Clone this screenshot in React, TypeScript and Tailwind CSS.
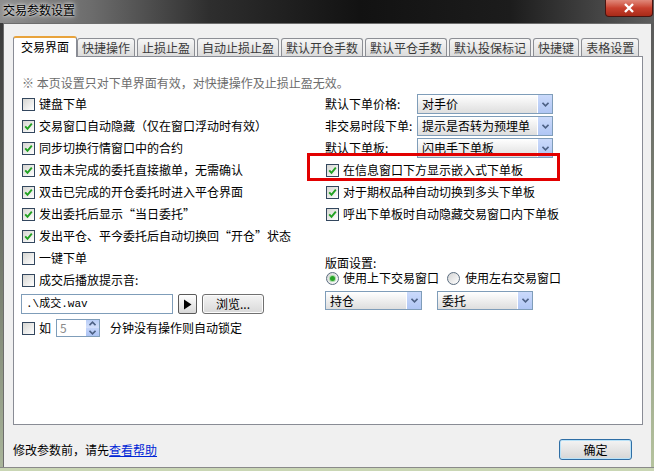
import React from "react";

const leftRows: { text: string; on: boolean }[] = [
  { text: "键盘下单", on: false },
  { text: "交易窗口自动隐藏（仅在窗口浮动时有效）", on: true },
  { text: "同步切换行情窗口中的合约", on: true },
  { text: "双击未完成的委托直接撤单，无需确认", on: true },
  { text: "双击已完成的开仓委托时进入平仓界面", on: true },
  { text: "发出委托后显示“当日委托”", on: true },
  { text: "发出平仓、平今委托后自动切换回“开仓”状态", on: true },
  { text: "一键下单", on: false },
  { text: "成交后播放提示音:", on: false },
];

const tabs = ["快捷操作", "止损止盈", "自动止损止盈", "默认开仓手数", "默认平仓手数", "默认投保标记", "快捷键", "表格设置"];

function Check({ on }: { on?: boolean }) {
  return (
    <span className="w-[13px] h-[13px] shrink-0 border border-[#33475e] bg-linear-to-br from-[#d6d6d2] to-white flex items-center justify-center">
      {on && (
        <svg width="9" height="9" viewBox="0 0 9 9">
          <path d="M1.2 4.3 L3.5 6.8 L7.8 1.6" stroke="#21a121" strokeWidth="1.9" fill="none" />
        </svg>
      )}
    </span>
  );
}

function Radio({ on }: { on?: boolean }) {
  return (
    <span className="w-[13px] h-[13px] shrink-0 rounded-full border border-[#5b6d80] bg-linear-to-br from-[#d4d4d4] to-white flex items-center justify-center">
      {on && <span className="w-[5px] h-[5px] rounded-full bg-[#27a327] shadow-[0_0_0_1px_#a8dca8]" />}
    </span>
  );
}

function Chevron() {
  return (
    <svg width="7" height="5" viewBox="0 0 7 5">
      <path d="M0.5 0.8 L3.5 3.8 L6.5 0.8" stroke="#4d6185" strokeWidth="1.6" fill="none" />
    </svg>
  );
}

function Combo({ className, text }: { className: string; text: string }) {
  return (
    <div className={`${className} border border-[#7f9db9] flex bg-linear-to-b from-white to-[#dedede]`}>
      <span className="flex-1 pl-[4px] flex items-center">{text}</span>
      <span className="w-[15px] border-l border-white bg-linear-to-b from-[#cbdafb] to-[#b0c6f4] flex items-center justify-center">
        <Chevron />
      </span>
    </div>
  );
}

export default function App() {
  return (
    <div className="relative w-[654px] h-[471px] overflow-hidden bg-[#2a2a2a] text-[12px] text-black font-['Noto_Sans_CJK_SC','Noto_Sans',sans-serif]">
      {/* title bar */}
      <div className="h-[23px] flex items-start justify-between bg-[linear-gradient(90deg,#8e8e8e_0%,#6c6c6c_14%,#2e2e2e_32%,#121212_55%,#1c1c1c_78%,#5e5e5e_100%)]">
        <span className="pl-[3px] leading-[20px] [text-shadow:0_0_6px_#e8e8e8,0_0_3px_#ffffff]">交易参数设置</span>
        <span className="w-[48px] h-[17px] mr-px rounded-b-[4px] border border-t-0 border-[#4a1410] bg-linear-to-b from-[#e0887a] via-[#c8402e] to-[#a82a18] flex items-center justify-center">
          <svg width="12" height="10" viewBox="0 0 12 10">
            <path d="M2 1 L10 9 M10 1 L2 9" stroke="#fff" strokeWidth="2.4" />
          </svg>
        </span>
      </div>

      <div className="flex h-[444px]">
        <div className="w-[3px] bg-linear-to-b from-[#3a3a3a] to-[#a9b59a]" />
        {/* client area */}
        <div className="w-[648px] bg-[#f0f0f0] border-t border-l border-[#6d6d6d] flex flex-col">
          {/* tabs */}
          <div className="flex items-end ml-[9px] mt-[11px] h-[21px] relative z-10">
            <div className="h-[21px] -mb-px px-[7px] pt-[1px] bg-white border border-b-0 border-[#898c95] border-t-[2px] border-t-[#e8a33c] rounded-t-[3px] leading-[16px]">
              交易界面
            </div>
            {tabs.map((t, i) => (
              <div
                key={t}
                className={`${i === 0 ? "" : "ml-[2px]"} h-[18px] px-[4px] border border-b-0 border-[#8c8e94] rounded-t-[3px] bg-linear-to-b from-[#f6f6f6] to-[#dcdcdc] text-[#3a3a3a] leading-[17px]`}
              >
                {t}
              </div>
            ))}
          </div>

          {/* panel */}
          <div className="relative h-[369px] ml-[9px] mr-[8px] border border-[#898c95] bg-white pl-[8px] pt-[15px]">
            <div className="h-[21px] leading-[21px] text-[#6d6d6d]">※ 本页设置只对下单界面有效，对快捷操作及止损止盈无效。</div>
            <div className="flex">
              {/* left column */}
              <div className="w-[303px] flex flex-col">
                {leftRows.map((r) => (
                  <div key={r.text} className="h-[22px] flex items-center gap-[4px]">
                    <Check on={r.on} />
                    <span>{r.text}</span>
                  </div>
                ))}
                <div className="mt-[3px] h-[20px] flex">
                  <div className="-ml-px w-[152px] border border-[#7f9db9] bg-white pl-[4px] flex items-center font-['Liberation_Mono','Noto_Sans_CJK_SC',monospace] text-[11px]">
                    .\成交.wav
                  </div>
                  <div className="ml-[5px] w-[19px] border border-[#5a5a5a] rounded-[2px] bg-linear-to-b from-white to-[#d8d8d8] flex items-center justify-center">
                    <svg width="9" height="11" viewBox="0 0 9 11">
                      <path d="M1 0.5 L8.5 5.5 L1 10.5 Z" fill="#000" />
                    </svg>
                  </div>
                  <div className="ml-[5px] w-[62px] border border-[#707070] rounded-[3px] bg-linear-to-b from-[#f4f4f4] to-[#d9d9d9] shadow-[inset_0_0_0_1px_#fcfcfc] flex items-center justify-center">
                    浏览...
                  </div>
                </div>
                <div className="mt-[3px] h-[22px] flex items-center">
                  <Check />
                  <span className="ml-[4px]">如</span>
                  <div className="ml-[5px] w-[44px] h-[18px] border border-[#7f9db9] bg-white flex">
                    <span className="flex-1 pl-[3px] text-[#8a8a8a] flex items-center">5</span>
                    <span className="w-[14px] flex flex-col border-l border-white">
                      <span className="flex-1 bg-linear-to-b from-[#d4e0fb] to-[#b8cdf6] flex items-center justify-center rotate-180">
                        <Chevron />
                      </span>
                      <span className="flex-1 bg-linear-to-b from-[#c3d4fa] to-[#acc3f3] flex items-center justify-center">
                        <Chevron />
                      </span>
                    </span>
                  </div>
                  <span className="ml-[10px]">分钟没有操作则自动锁定</span>
                </div>
              </div>

              {/* right column */}
              <div className="flex flex-col">
                {[
                  ["默认下单价格:", "对手价"],
                  ["非交易时段下单:", "提示是否转为预埋单"],
                  ["默认下单板:", "闪电手下单板"],
                ].map(([l, v]) => (
                  <div key={l} className="h-[22px] flex items-center">
                    <span className="w-[92px]">{l}</span>
                    <Combo className="w-[136px] h-[20px]" text={v} />
                  </div>
                ))}
                {["在信息窗口下方显示嵌入式下单板", "对于期权品种自动切换到多头下单板", "呼出下单板时自动隐藏交易窗口内下单板"].map((t) => (
                  <div key={t} className="h-[22px] flex items-center gap-[4px] ml-px">
                    <Check on />
                    <span>{t}</span>
                  </div>
                ))}
                <div className="mt-[30px] h-[15px] leading-[15px]">版面设置:</div>
                <div className="h-[16px] flex items-center ml-px">
                  <Radio on />
                  <span className="ml-[4px]">使用上下交易窗口</span>
                  <span className="ml-[8px]"><Radio /></span>
                  <span className="ml-[5px]">使用左右交易窗口</span>
                </div>
                <div className="mt-[5px] flex">
                  <Combo className="w-[97px] h-[19px]" text="持仓" />
                  <Combo className="ml-[15px] w-[96px] h-[19px]" text="委托" />
                </div>
              </div>
            </div>
          </div>

          {/* footer */}
          <div className="mt-[14px] h-[21px] flex items-center justify-between pl-[9px] pr-[19px]">
            <span>
              修改参数前，请先<span className="text-[#0026d6] underline">查看帮助</span>
            </span>
            <div className="w-[73px] h-[21px] rounded-[3px] border border-[#2f6ea5] bg-linear-to-b from-[#f4f4f4] to-[#d6d6d6] shadow-[inset_0_0_0_1px_#b9e2f8] flex items-center justify-center">
              确定
            </div>
          </div>
        </div>
        <div className="w-[3px] bg-linear-to-b from-[#5a5a5a] to-[#b5c39e]" />
      </div>
      <div className="h-[4px] bg-[#c9d6b4] border-t border-[#8a8a8a]" />

      {/* highlight annotation */}
      <div className="absolute left-[307px] top-[153px] w-[253px] h-[28px] border-[3px] border-[#e20000]" />
    </div>
  );
}
